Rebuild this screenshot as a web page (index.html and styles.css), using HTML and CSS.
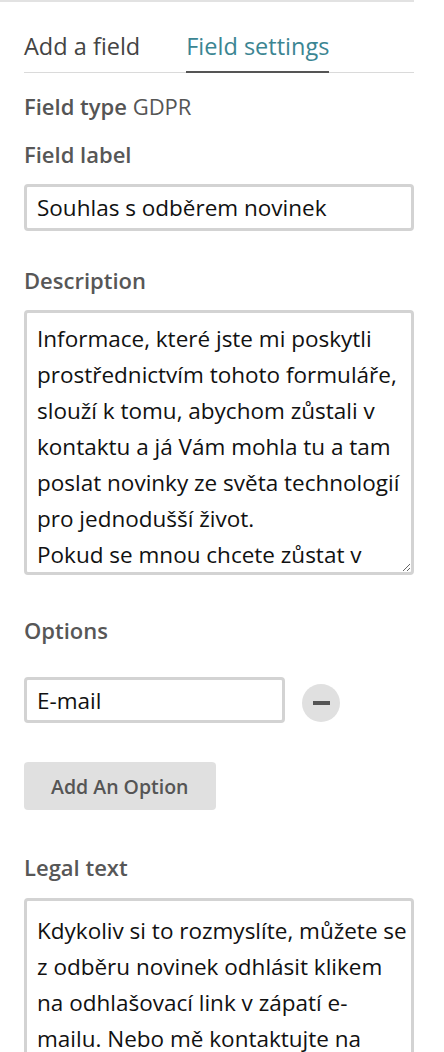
FILE: index.html
```html
<!DOCTYPE html>
<html lang="cs">
  <head>
    <meta charset="UTF-8" />
    <meta name="viewport" content="width=device-width, initial-scale=1.0" />
    <title>Field settings</title>
    <link rel="stylesheet" href="styles.css">
  </head>
  <body>
    <div class="panel">
      <ul class="tabs">
        <li class="tab">Add a field</li>
        <li class="tab active">Field settings</li>
      </ul>

      <p class="field-type"><b>Field type</b> GDPR</p>

      <div class="field field-first">
        <label for="fieldLabel">Field label</label>
        <input type="text" id="fieldLabel" class="text-input" value="Souhlas s odběrem novinek" />
      </div>

      <div class="field">
        <label for="description">Description</label>
        <textarea id="description" class="text-area desc-area">Informace, které jste mi poskytli prostřednictvím tohoto formuláře, slouží k tomu, abychom zůstali v kontaktu a já Vám mohla tu a tam poslat novinky ze světa technologií pro jednodušší život.
Pokud se mnou chcete zůstat v kontaktu, zaškrtněte prosím políčko níže.</textarea>
      </div>

      <div class="field field-options">
        <label for="option1">Options</label>
        <div class="option-row">
          <input type="text" id="option1" class="text-input option-input" value="E-mail" />
          <button class="remove-btn" type="button"><span class="dash"></span></button>
        </div>
        <button class="add-btn" type="button">Add An Option</button>
      </div>

      <div class="field field-legal">
        <label for="legal">Legal text</label>
        <textarea id="legal" class="text-area legal-area">Kdykoliv si to rozmyslíte, můžete se z odběru novinek odhlásit klikem
na odhlašovací link v zápatí e-mailu. Nebo mě kontaktujte na adrese uvedené v patičce webu.</textarea>
      </div>
    </div>
  </body>
</html>
```

FILE: styles.css
```css
html,
body {
  overflow: hidden;
}
body {
  margin: 0;
  background-color: #ffffff;
  font-family: "Open Sans", "Liberation Sans", sans-serif;
  color: #555555;
}
.panel {
  width: 390px;
  padding-left: 24px;
  border-top: 2px solid #e2e2e2;
}
.tabs {
  display: flex;
  gap: 46px;
  list-style-type: none;
  margin: 0;
  padding: 29px 0 0 0;
  border-bottom: 1px solid #dadada;
}
.tab {
  font-size: 23.5px;
  line-height: 30px;
  color: #444444;
  padding-bottom: 10px;
  margin-bottom: -1px;
  border-bottom: 2px solid transparent;
}
.tab.active {
  color: #3b8592;
  border-bottom-color: #555555;
}
.field-type {
  margin: 18px 0 0 0;
  font-size: 22px;
  line-height: 30px;
}
.field-type b {
  font-weight: 600;
}
.field {
  margin-top: 34px;
}
.field-first {
  margin-top: 18px;
}
.field-options {
  margin-top: 40px;
}
.field-legal {
  margin-top: 42px;
}
label {
  display: block;
  font-size: 22px;
  line-height: 30px;
  font-weight: 600;
  color: #575757;
  margin-bottom: 15px;
}
.field-options label {
  margin-bottom: 32px;
}
.field-legal label {
  margin-bottom: 16px;
}
.text-input {
  display: block;
  box-sizing: border-box;
  width: 390px;
  height: 47px;
  padding: 0 10px;
  border: 3px solid #d3d3d3;
  border-radius: 4px;
  font-family: "Open Sans", "Liberation Sans", sans-serif;
  font-size: 22.5px;
  color: #111111;
  outline: none;
}
.text-area {
  display: block;
  box-sizing: border-box;
  width: 390px;
  padding: 8px 4px 0 10px;
  border: 3px solid #d3d3d3;
  border-radius: 4px;
  font-family: "Open Sans", "Liberation Sans", sans-serif;
  font-size: 22.5px;
  line-height: 36px;
  color: #111111;
  overflow: hidden;
  outline: none;
}
.desc-area {
  height: 265px;
}
.legal-area {
  height: 220px;
  padding-top: 12px;
}
.option-row {
  display: flex;
  align-items: flex-start;
}
.option-input {
  width: 261px;
  height: 46px;
}
.remove-btn {
  display: flex;
  align-items: center;
  justify-content: center;
  width: 38px;
  height: 38px;
  margin: 7px 0 0 17px;
  padding: 0;
  border: none;
  border-radius: 50%;
  background-color: #e0e0e0;
  cursor: pointer;
}
.dash {
  width: 17px;
  height: 4px;
  background-color: #555555;
}
.add-btn {
  display: block;
  margin-top: 39px;
  height: 48px;
  padding: 0 27px;
  border: none;
  border-radius: 4px;
  background-color: #e0e0e0;
  font-family: "Open Sans", "Liberation Sans", sans-serif;
  font-size: 19.5px;
  font-weight: 600;
  color: #555555;
  cursor: pointer;
}
```
